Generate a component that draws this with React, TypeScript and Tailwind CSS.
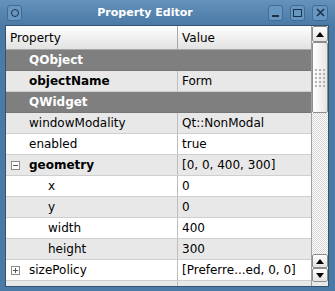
import React from "react";

type Row = {
  name: string;
  value?: string;
  kind: "group" | "prop";
  bold?: boolean;
  level?: number;
  toggle?: "open" | "closed";
  shade?: boolean;
};

const rows: Row[] = [
  { name: "QObject", kind: "group" },
  { name: "objectName", value: "Form", kind: "prop", bold: true, shade: true },
  { name: "QWidget", kind: "group" },
  { name: "windowModality", value: "Qt::NonModal", kind: "prop", shade: true },
  { name: "enabled", value: "true", kind: "prop" },
  { name: "geometry", value: "[0, 0, 400, 300]", kind: "prop", bold: true, toggle: "open", shade: true },
  { name: "x", value: "0", kind: "prop", level: 1 },
  { name: "y", value: "0", kind: "prop", level: 1, shade: true },
  { name: "width", value: "400", kind: "prop", level: 1 },
  { name: "height", value: "300", kind: "prop", level: 1, shade: true },
  { name: "sizePolicy", value: "[Preferre...ed, 0, 0]", kind: "prop", toggle: "closed" },
];

const TitleButton = ({ children }: { children: React.ReactNode }) => (
  <div className="w-[15px] h-[16px] rounded-[3px] border border-[#3f6d98] bg-[#6796c1] flex items-center justify-center">
    {children}
  </div>
);

const Arrow = ({ up }: { up?: boolean }) => (
  <svg width="8" height="5" viewBox="0 0 8 5">
    {up ? <polygon points="0,5 8,5 4,0" fill="#000" /> : <polygon points="0,0 8,0 4,5" fill="#000" />}
  </svg>
);

const ToggleBox = ({ open }: { open: boolean }) => (
  <div className="absolute left-[5px] top-[6px] w-[9px] h-[9px] border border-[#8c8c8c] bg-white flex items-center justify-center">
    <div className="relative w-[5px] h-[5px]">
      <div className="absolute left-0 top-[2px] w-[5px] h-[1px] bg-[#555]" />
      {!open && <div className="absolute left-[2px] top-0 w-[1px] h-[5px] bg-[#555]" />}
    </div>
  </div>
);

const App = () => {
  return (
    <div
      className="w-[335px] h-[291px] bg-[#4b7aa6] flex flex-col overflow-hidden"
      style={{ fontFamily: '"DejaVu Sans", sans-serif' }}
    >
      {/* title bar */}
      <div className="h-[25px] bg-gradient-to-b from-[#6492bc] to-[#4b7aa6] flex items-center pl-[7px] pr-[7px]">
        <TitleButton>
          <div className="w-[8px] h-[8px] rounded-full border-[1.5px] border-[#1d3149]" />
        </TitleButton>
        <div className="flex-1 text-center text-white font-bold text-[11px] leading-none">
          Property Editor
        </div>
        <div className="flex gap-[7px]">
          <TitleButton>
            <div className="w-[7px] h-[2px] bg-[#1d3149] mt-[6px]" />
          </TitleButton>
          <TitleButton>
            <div className="w-[9px] h-[8px] border-[1.5px] border-[#1d3149]" />
          </TitleButton>
          <div className="w-[16px] h-[16px] rounded-[3px] border border-[#3f6d98] bg-[#6796c1] flex items-center justify-center">
            <svg width="9" height="9" viewBox="0 0 9 9">
              <path d="M1 1 L8 8 M8 1 L1 8" stroke="#1d3149" strokeWidth="1.6" />
            </svg>
          </div>
        </div>
      </div>

      {/* body */}
      <div className="flex-1 pl-[5px] pr-[6px] pb-[4px] flex">
        <div className="flex-1 border border-[#34536f] bg-[#e8e8e8] flex overflow-hidden">
          {/* table */}
          <div className="flex-1 flex flex-col bg-white text-[12px] text-black">
            <div className="h-[24px] flex shrink-0 bg-gradient-to-b from-[#fefefe] to-[#e2e2e2] border-b border-[#a8a8a8]">
              <div className="w-[172px] border-r border-[#a8a8a8] flex items-center pl-[4px]">Property</div>
              <div className="flex-1 flex items-center pl-[4px]">Value</div>
            </div>
            {rows.map((r) =>
              r.kind === "group" ? (
                <div
                  key={r.name}
                  className="h-[21px] shrink-0 bg-[#7f7f7f] text-white font-bold flex items-center pl-[23px] border-b border-[#767676]"
                >
                  {r.name}
                </div>
              ) : (
                <div
                  key={r.name}
                  className={`h-[21px] shrink-0 flex border-b border-[#cfcfcf] ${r.shade ? "bg-[#e8e8e8]" : "bg-white"}`}
                >
                  <div
                    className={`relative w-[172px] border-r border-[#bdbdbd] flex items-center ${
                      r.level ? "pl-[42px]" : "pl-[23px]"
                    } ${r.bold ? "font-bold" : ""}`}
                  >
                    {r.toggle && <ToggleBox open={r.toggle === "open"} />}
                    {r.name}
                  </div>
                  <div className="flex-1 flex items-center pl-[4px] whitespace-nowrap">{r.value}</div>
                </div>
              )
            )}
            <div className="flex-1 bg-[#e8e8e8] flex">
              <div className="w-[172px] border-r border-[#bdbdbd]" />
            </div>
          </div>

          {/* scrollbar */}
          <div className="w-[17px] flex flex-col border-l border-[#a0a0a0] bg-white">
            <div className="h-[16px] shrink-0 border border-[#8c8c8c] rounded-[2px] bg-gradient-to-b from-white to-[#e4e4e4] flex items-center justify-center">
              <Arrow up />
            </div>
            <div className="h-[71px] shrink-0 border border-[#8c8c8c] rounded-[2px] bg-gradient-to-r from-white to-[#e6e6e6] flex items-center justify-center">
              <div className="grid grid-cols-3 gap-[2px]">
                {Array.from({ length: 15 }).map((_, i) => (
                  <div key={i} className="w-[2px] h-[2px] bg-[#b4b4b4]" />
                ))}
              </div>
            </div>
            <div className="flex-1 bg-[repeating-conic-gradient(#d6d6d6_0%_25%,#ffffff_0%_50%)] bg-[length:2px_2px]" />
            <div className="h-[14px] shrink-0 border border-[#8c8c8c] rounded-[2px] bg-gradient-to-b from-white to-[#e4e4e4] flex items-center justify-center">
              <Arrow up />
            </div>
            <div className="h-[14px] shrink-0 border border-[#8c8c8c] rounded-[2px] bg-gradient-to-b from-white to-[#e4e4e4] flex items-center justify-center">
              <Arrow />
            </div>
            <div className="h-[4px] shrink-0 bg-[#e8e8e8]" />
          </div>
        </div>
      </div>
    </div>
  );
};

export default App;
